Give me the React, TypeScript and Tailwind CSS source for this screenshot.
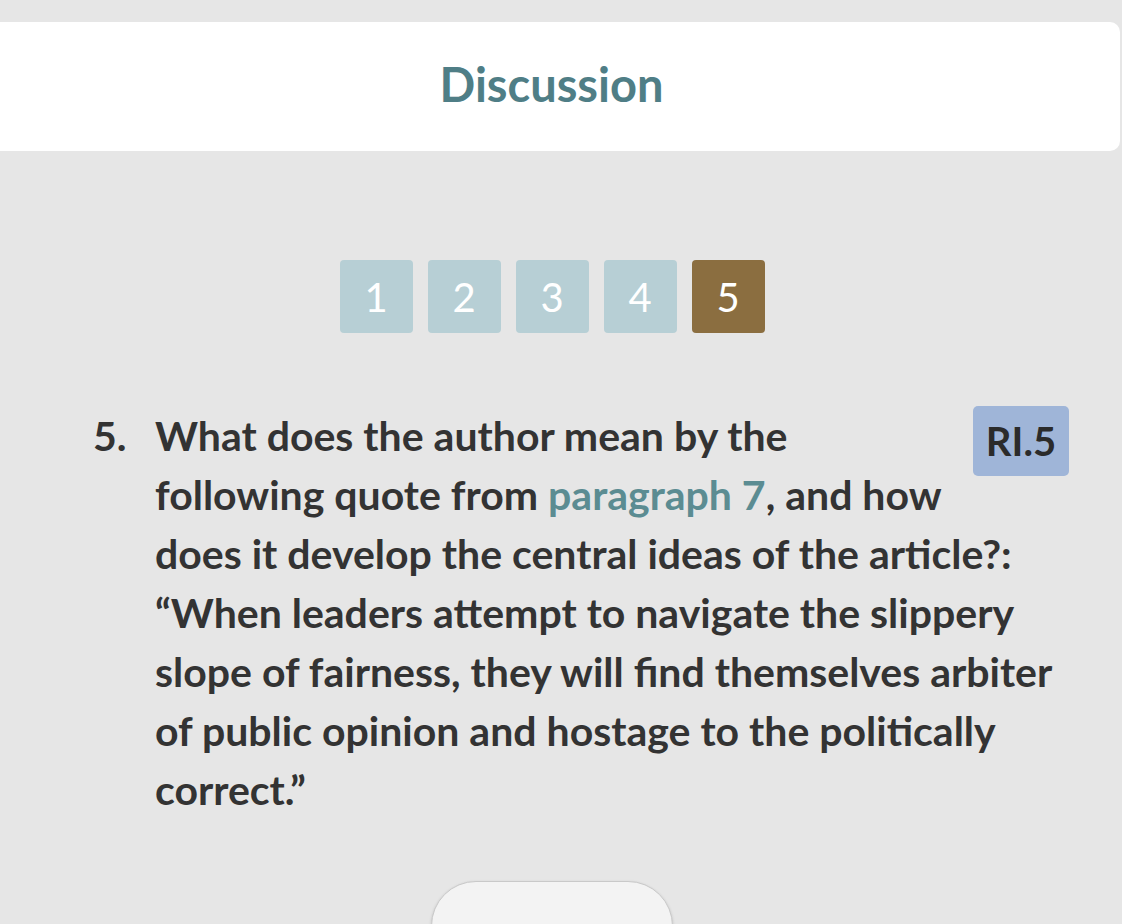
export default function App() {
  const pages = [1, 2, 3, 4, 5];
  const active = 5;

  return (
    <div className="h-[924px] overflow-hidden bg-[#e6e6e6] font-['Lato','Liberation_Sans',sans-serif] text-[#333333]">
      <div className="pt-[22px]">
        <div className="-ml-4 flex h-[129px] w-[1136px] items-center justify-center rounded-r-[10px] bg-white pb-[4px] pl-4 pr-[17px]">
          <h1 className="text-[47px] font-bold text-[#4f7e86]">Discussion</h1>
        </div>
      </div>

      <div className="mt-[109px] flex justify-center gap-[15px] pr-[18px]">
        {pages.map((p) => (
          <button
            key={p}
            className={
              p === active
                ? "flex h-[73px] w-[73px] items-center justify-center rounded-[4px] bg-[#8b6e40] text-[40px] text-white"
                : "flex h-[73px] w-[73px] items-center justify-center rounded-[4px] bg-[#b7cfd5] text-[40px] text-white"
            }
          >
            {p}
          </button>
        ))}
      </div>

      <div className="mt-[73px] flex pl-[93px] pr-[53px] text-[41px] font-bold leading-[59px]">
        <div className="w-[62px] shrink-0">5.</div>
        <div className="flex-1">
          <span className="float-right mb-2 ml-[30px] flex h-[70px] w-[96px] items-center justify-center rounded-[5px] bg-[#9fb5d8] text-[40px] text-[#2b2b2b]">
            RI.5
          </span>
          What does the author mean by the following quote from{" "}
          <a className="text-[#5b8c92]">paragraph 7</a>, and how does it develop the central ideas of the article?:
          “When leaders attempt to navigate the slippery slope of fairness, they will find themselves arbiter of
          public opinion and hostage to the politically correct.”
        </div>
      </div>

      <div className="mt-[62px] flex justify-center pr-[19px]">
        <button className="h-[90px] w-[242px] rounded-[50px] border border-[#c9c9c9] bg-[#f3f3f3] shadow-[0_1px_3px_rgba(0,0,0,0.15)]" />
      </div>
    </div>
  );
}
